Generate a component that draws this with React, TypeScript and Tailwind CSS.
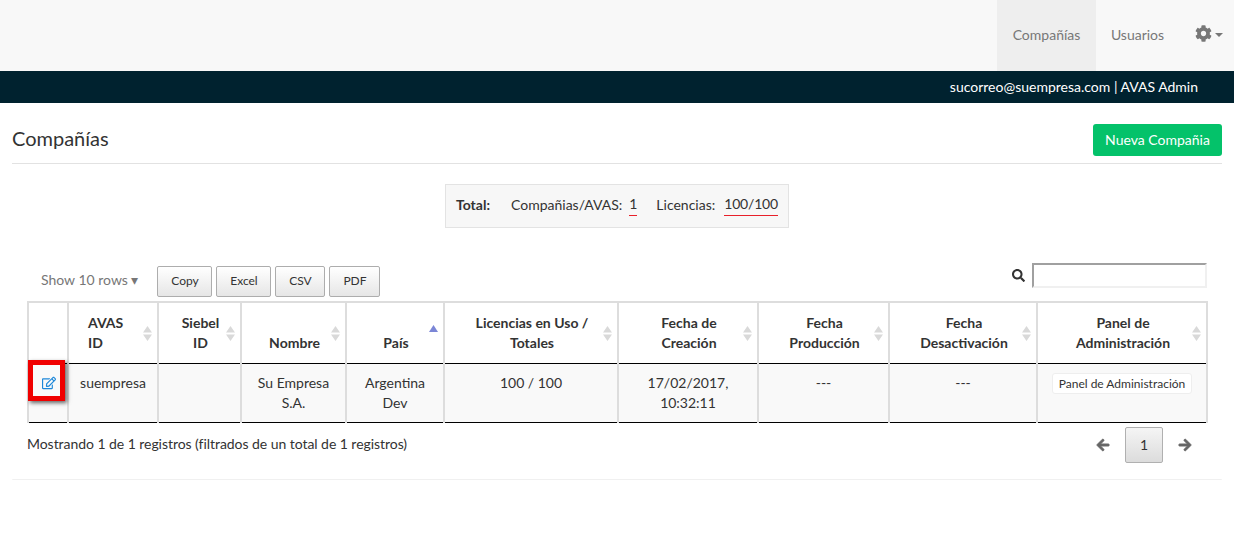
import { FaCog, FaSearch, FaArrowLeft, FaArrowRight, FaRegEdit } from "react-icons/fa";

const headers = [
  { label: ["AVAS", "ID"], width: "w-[90px]", cell: "pl-[19px] text-left" },
  { label: ["Siebel", "ID"], width: "w-[83px]" },
  { label: ["Nombre"], width: "w-[105px]" },
  { label: ["País"], width: "w-[98px]", sorted: true },
  { label: ["Licencias en Uso /", "Totales"], width: "w-[174px]" },
  { label: ["Fecha de", "Creación"], width: "w-[140px]" },
  { label: ["Fecha", "Producción"], width: "w-[131px]" },
  { label: ["Fecha", "Desactivación"], width: "w-[148px]" },
  { label: ["Panel de", "Administración"], width: "w-[170px]" },
];

function SortIcon({ sorted }: { sorted?: boolean }) {
  if (sorted) {
    return (
      <svg className="absolute right-[5px] top-[22px]" width="9" height="8" viewBox="0 0 9 8">
        <path d="M4.5 0 L9 7 L0 7 Z" fill="#7b86d6" />
      </svg>
    );
  }
  return (
    <svg className="absolute right-[5px] top-[23px]" width="9" height="16" viewBox="0 0 9 16">
      <path d="M4.5 0 L9 6.5 L0 6.5 Z M0 8.5 L9 8.5 L4.5 15 Z" fill="#d9d9d9" />
    </svg>
  );
}

function ToolButton({ label, width }: { label: string; width: string }) {
  return (
    <button className={`h-[31px] ${width} rounded-[2px] border border-[#adadad] bg-gradient-to-b from-white to-[#e6e6e6] pb-[2px] text-[12px] text-[#333]`}>
      {label}
    </button>
  );
}

export default function App() {
  return (
    <div className="relative min-h-[537px] bg-white font-['Lato','Open_Sans',sans-serif] text-[14px] text-[#333]">
      {/* Navbar */}
      <nav className="flex h-[71px] justify-end bg-[#f8f8f8] text-[#777]">
        <a className="flex w-[99px] items-center justify-center bg-[#eeeeee] pb-[2px]">Compañías</a>
        <a className="flex w-[84px] items-center justify-center pb-[2px] pr-[1px]">Usuarios</a>
        <a className="flex w-[54px] items-center pb-[4px] pl-[15px]">
          <FaCog className="text-[17px] text-[#777]" />
          <span className="ml-[3px] mt-[2px] h-0 w-0 border-x-[4px] border-t-[4px] border-x-transparent border-t-[#777]" />
        </a>
      </nav>
      <div className="flex h-[32px] items-center justify-end bg-[#00222f] pb-[2px] pr-[36px] text-white">
        sucorreo@suempresa.com | AVAS Admin
      </div>

      <main className="px-[12px]">
        {/* Title */}
        <div className="flex h-[61px] items-end justify-between border-b border-[#e2e2e2] pb-[7px]">
          <h1 className="pb-[6px] text-[20px] leading-[24px]">Compañías</h1>
          <button className="h-[32px] w-[129px] rounded-[3px] bg-[#04c26a] pb-[2px] text-white">Nueva Compañia</button>
        </div>

        {/* Totals */}
        <div className="mt-[20px] flex justify-center">
          <div className="flex h-[44px] w-[344px] items-center border border-[#e3e3e3] bg-[#f7f7f7] pb-[4px] pl-[10px]">
            <b className="font-bold">Total:</b>
            <span className="ml-[21px]">Compañias/AVAS:</span>
            <span className="ml-[7px] mt-[2px] border-b border-[#e8202a] pb-[1px] leading-[20px]">1</span>
            <span className="ml-[19px]">Licencias:</span>
            <span className="ml-[9px] mt-[2px] border-b border-[#e8202a] pb-[1px] leading-[20px] tracking-[-0.2px]">100/100</span>
          </div>
        </div>

        {/* Toolbar */}
        <div className="mt-[35px] flex h-[38px] pl-[15px]">
          <div className="flex h-[33px] items-center pl-[14px] text-[#777]">Show 10 rows ▾</div>
          <div className="ml-[19px] mt-[3px] flex gap-[4px]">
            <ToolButton label="Copy" width="w-[55px]" />
            <ToolButton label="Excel" width="w-[55px]" />
            <ToolButton label="CSV" width="w-[50px]" />
            <ToolButton label="PDF" width="w-[51px]" />
          </div>
          <div className="ml-auto mr-[15px] flex gap-[7px]">
            <FaSearch className="mt-[6px] text-[13px] text-[#333]" />
            <input className="h-[25px] w-[175px] border-2 border-b-[#f0f0f0] border-l-[#a0a0a0] border-r-[#f0f0f0] border-t-[#a0a0a0] bg-white" />
          </div>
        </div>

        {/* Table */}
        <div className="px-[15px]">
          <table className="w-[1179px] table-fixed border-collapse">
            <colgroup>
              <col className="w-[40px]" />
              {headers.map((h) => (
                <col key={h.label.join()} className={h.width} />
              ))}
            </colgroup>
            <thead>
              <tr className="h-[61px]">
                <th className="border-2 border-b-0 border-[#dddddd]" />
                {headers.map((h) => (
                  <th
                    key={h.label.join()}
                    className={`relative border-2 border-b-0 border-[#dddddd] pb-[10px] align-bottom font-bold leading-[20px] ${h.cell ?? "pl-[10px] pr-[8px] text-center"}`}
                  >
                    {h.label.map((l) => (
                      <div key={l}>{l}</div>
                    ))}
                    <SortIcon sorted={h.sorted} />
                  </th>
                ))}
              </tr>
            </thead>
            <tbody className="border-y border-y-black">
              <tr className="h-[59px] bg-[#f9f9f9] text-center align-top leading-[20px]">
                <td className="border-x-2 border-[#dddddd] pt-[12px]">
                  <FaRegEdit className="ml-[13px] text-[14px] text-[#1e88d9]" />
                </td>
                <td className="border-x-2 border-[#dddddd] pt-[9px]">suempresa</td>
                <td className="border-x-2 border-[#dddddd]" />
                <td className="border-x-2 border-[#dddddd] pt-[9px]">
                  Su Empresa
                  <br />
                  S.A.
                </td>
                <td className="border-x-2 border-[#dddddd] pt-[9px]">
                  Argentina
                  <br />
                  Dev
                </td>
                <td className="border-x-2 border-[#dddddd] pt-[9px]">100 / 100</td>
                <td className="border-x-2 border-[#dddddd] pt-[9px]">
                  17/02/2017,
                  <br />
                  10:32:11
                </td>
                <td className="border-x-2 border-[#dddddd] pt-[9px]">---</td>
                <td className="border-x-2 border-[#dddddd] pt-[9px]">---</td>
                <td className="border-x-2 border-[#dddddd] pt-[9px]">
                  <span className="inline-block rounded-[3px] border border-[#eeeeee] bg-white px-[5.5px] text-[12px] leading-[19px]">
                    Panel de Administración
                  </span>
                </td>
              </tr>
            </tbody>
          </table>

          {/* Footer */}
          <div className="flex h-[56px] w-[1179px] items-start justify-between">
            <span className="mt-[11px] leading-[20px] tracking-[-0.05px]">
              Mostrando 1 de 1 registros (filtrados de un total de 1 registros)
            </span>
            <div className="mr-[14px] mt-[4px] flex items-center gap-[15px] text-[#666]">
              <FaArrowLeft className="text-[14px]" stroke="currentColor" strokeWidth={30} />
              <span className="flex h-[36px] w-[38px] items-center justify-center rounded-[2px] border border-[#b0b0b0] bg-gradient-to-b from-[#f5f5f5] to-[#dcdcdc] text-[#333]">
                1
              </span>
              <FaArrowRight className="text-[14px]" stroke="currentColor" strokeWidth={30} />
            </div>
          </div>
        </div>
        <div className="rounded-b-[4px] border-b border-[#f0f0f0]" />
      </main>

      {/* Red highlight over the edit icon */}
      <div className="absolute left-[28px] top-[360px] h-[41px] w-[37px] border-[5px] border-[#f00000] shadow-[2px_2px_4px_rgba(0,0,0,0.6)]" />
    </div>
  );
}
